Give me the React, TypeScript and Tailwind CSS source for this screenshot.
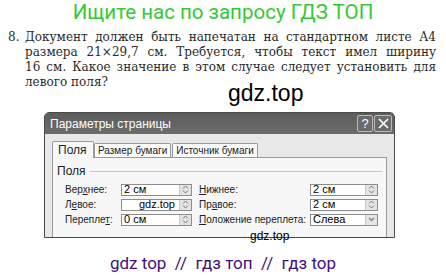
import React from 'react';

const lines = [
  'Документ должен быть напечатан на стандартном листе А4',
  'размера 21×29,7 см. Требуется, чтобы текст имел ширину',
  '16 см. Какое значение в этом случае следует установить для',
];

function Spinner() {
  return (
    <div className="flex h-full w-[12px] flex-col items-center justify-center border-l border-[#c8c8c8] bg-[#e4e4e4]">
      <svg width="7" height="9" viewBox="0 0 7 9">
        <path d="M1 3.5 L3.5 1 L6 3.5" fill="none" stroke="#777" strokeWidth="1" />
        <path d="M1 5.5 L3.5 8 L6 5.5" fill="none" stroke="#777" strokeWidth="1" />
      </svg>
    </div>
  );
}

function Field({ value, w, select, right }: { value: string; w: string; select?: boolean; right?: boolean }) {
  return (
    <div className={`flex h-[12px] shrink-0 items-stretch border border-[#8c8c8c] bg-white ${w}`}>
      <div className={`flex flex-1 items-center px-[2px] text-[11px] leading-none text-black ${right ? 'justify-end pr-[4px]' : ''}`}>
        {value}
      </div>
      {select ? (
        <div className="flex w-[12px] items-center justify-center border-l border-[#c8c8c8] bg-[#e4e4e4]">
          <svg width="7" height="5" viewBox="0 0 7 5">
            <path d="M1 1 L3.5 3.5 L6 1" fill="none" stroke="#777" strokeWidth="1.2" />
          </svg>
        </div>
      ) : (
        <Spinner />
      )}
    </div>
  );
}

function Label({ pre, key_, post, w }: { pre: string; key_: string; post: string; w: string }) {
  return (
    <div className={`${w} shrink-0 whitespace-nowrap text-[10px] leading-none text-[#222]`}>
      {pre}
      <span className="underline">{key_}</span>
      {post}
    </div>
  );
}

export default function App() {
  return (
    <div className="relative h-[278px] w-[446px] overflow-hidden bg-white font-['Liberation_Sans',sans-serif]">
      <div className="text-center font-['Roboto',sans-serif] text-[20.5px] leading-[24px] text-[#35c935]">
        Ищите нас по запросу ГДЗ ТОП
      </div>

      <div className="mt-[6px] flex pl-[8px] pr-[10px] font-['DejaVu_Serif',serif] text-[12px] leading-[15px] text-[#2a2a2a]">
        <span className="w-[17px] shrink-0">8.</span>
        <div className="flex-1">
          {lines.map((l) => (
            <div key={l} className="text-justify [text-align-last:justify]">
              {l}
            </div>
          ))}
          <div>левого поля?</div>
        </div>
      </div>

      <div className="ml-[44px] mt-[22px] flex h-[126px] w-[351px] flex-col overflow-hidden rounded-t-[5px] border border-[#4a4a4a] bg-[#e8e8e8]">
        <div className="flex h-[21px] shrink-0 items-center justify-between bg-gradient-to-b from-[#5c5c5c] to-[#6c6c6c] pl-[5px] pr-[2px]">
          <span className="text-[12px] leading-none text-white">Параметры страницы</span>
          <div className="flex gap-[1px]">
            <div className="flex h-[17px] w-[16px] items-center justify-center rounded-[2px] border border-[#bbbbbb] bg-[#6a6a6a] text-[13px] leading-none text-white">
              ?
            </div>
            <div className="flex h-[17px] w-[18px] items-center justify-center rounded-[2px] border border-[#bbbbbb] bg-[#6a6a6a]">
              <svg width="11" height="11" viewBox="0 0 11 11">
                <path d="M1 1 L10 10 M10 1 L1 10" stroke="white" strokeWidth="1.6" />
              </svg>
            </div>
          </div>
        </div>

        <div className="flex flex-1 flex-col px-[7px] pt-[7px]">
          <div className="flex items-end">
            <div className="relative z-10 -mb-[1px] flex h-[17px] w-[42px] items-center rounded-t-[2px] border border-b-0 border-[#9a9a9a] bg-[#f7f7f7] pl-[5px] text-[12px] leading-none text-[#222]">
              Поля
            </div>
            <div className="flex h-[14px] items-center rounded-t-[2px] border border-b-0 border-[#9a9a9a] bg-[#fbfbfb] px-[3px] text-[10px] leading-none text-[#222]">
              Размер бумаги
            </div>
            <div className="ml-[1px] flex h-[14px] items-center rounded-t-[2px] border border-b-0 border-[#9a9a9a] bg-[#fbfbfb] px-[3px] text-[10px] leading-none text-[#222]">
              Источник бумаги
            </div>
          </div>
          <div className="flex-1 border border-b-0 border-[#9a9a9a] bg-[#f7f7f7] pl-[4px] pr-[4px] pt-[6px]">
            <div className="flex h-[14px] items-center gap-[4px]">
              <span className="text-[12px] leading-none text-[#222]">Поля</span>
              <div className="h-[1px] flex-1 bg-[#c4c4c4]" />
            </div>
            <div className="mt-[4px] flex flex-col pl-[8px]">
              <div className="flex h-[15px] items-center">
                <Label pre="Вер" key_="х" post="нее:" w="w-[56px]" />
                <Field value="2 см" w="w-[71px]" />
                <div className="w-[7px]" />
                <Label pre="" key_="Н" post="ижнее:" w="w-[111px]" />
                <Field value="2 см" w="w-[68px]" />
              </div>
              <div className="flex h-[15px] items-center">
                <Label pre="Л" key_="е" post="вое:" w="w-[56px]" />
                <Field value="gdz.top" w="w-[71px]" right />
                <div className="w-[7px]" />
                <Label pre="Пр" key_="а" post="вое:" w="w-[111px]" />
                <Field value="2 см" w="w-[68px]" />
              </div>
              <div className="flex h-[15px] items-center">
                <Label pre="Перепле" key_="т" post=":" w="w-[56px]" />
                <Field value="0 см" w="w-[71px]" />
                <div className="w-[7px]" />
                <Label pre="" key_="П" post="оложение переплета:" w="w-[111px]" />
                <Field value="Слева" w="w-[68px]" select />
              </div>
            </div>
          </div>
        </div>
      </div>

      <div className="mt-[13px] text-center font-['Roboto',sans-serif] text-[17px] leading-[24px] text-[#3f1080]">
        gdz top &nbsp;//&nbsp; гдз топ &nbsp;//&nbsp; гдз top
      </div>

      <div className="absolute left-[228px] top-[80px] text-[23px] leading-[26px] text-black">gdz.top</div>
      <div className="absolute left-[250px] top-[230px] text-[12px] leading-[13px] text-black">gdz.top</div>
    </div>
  );
}
